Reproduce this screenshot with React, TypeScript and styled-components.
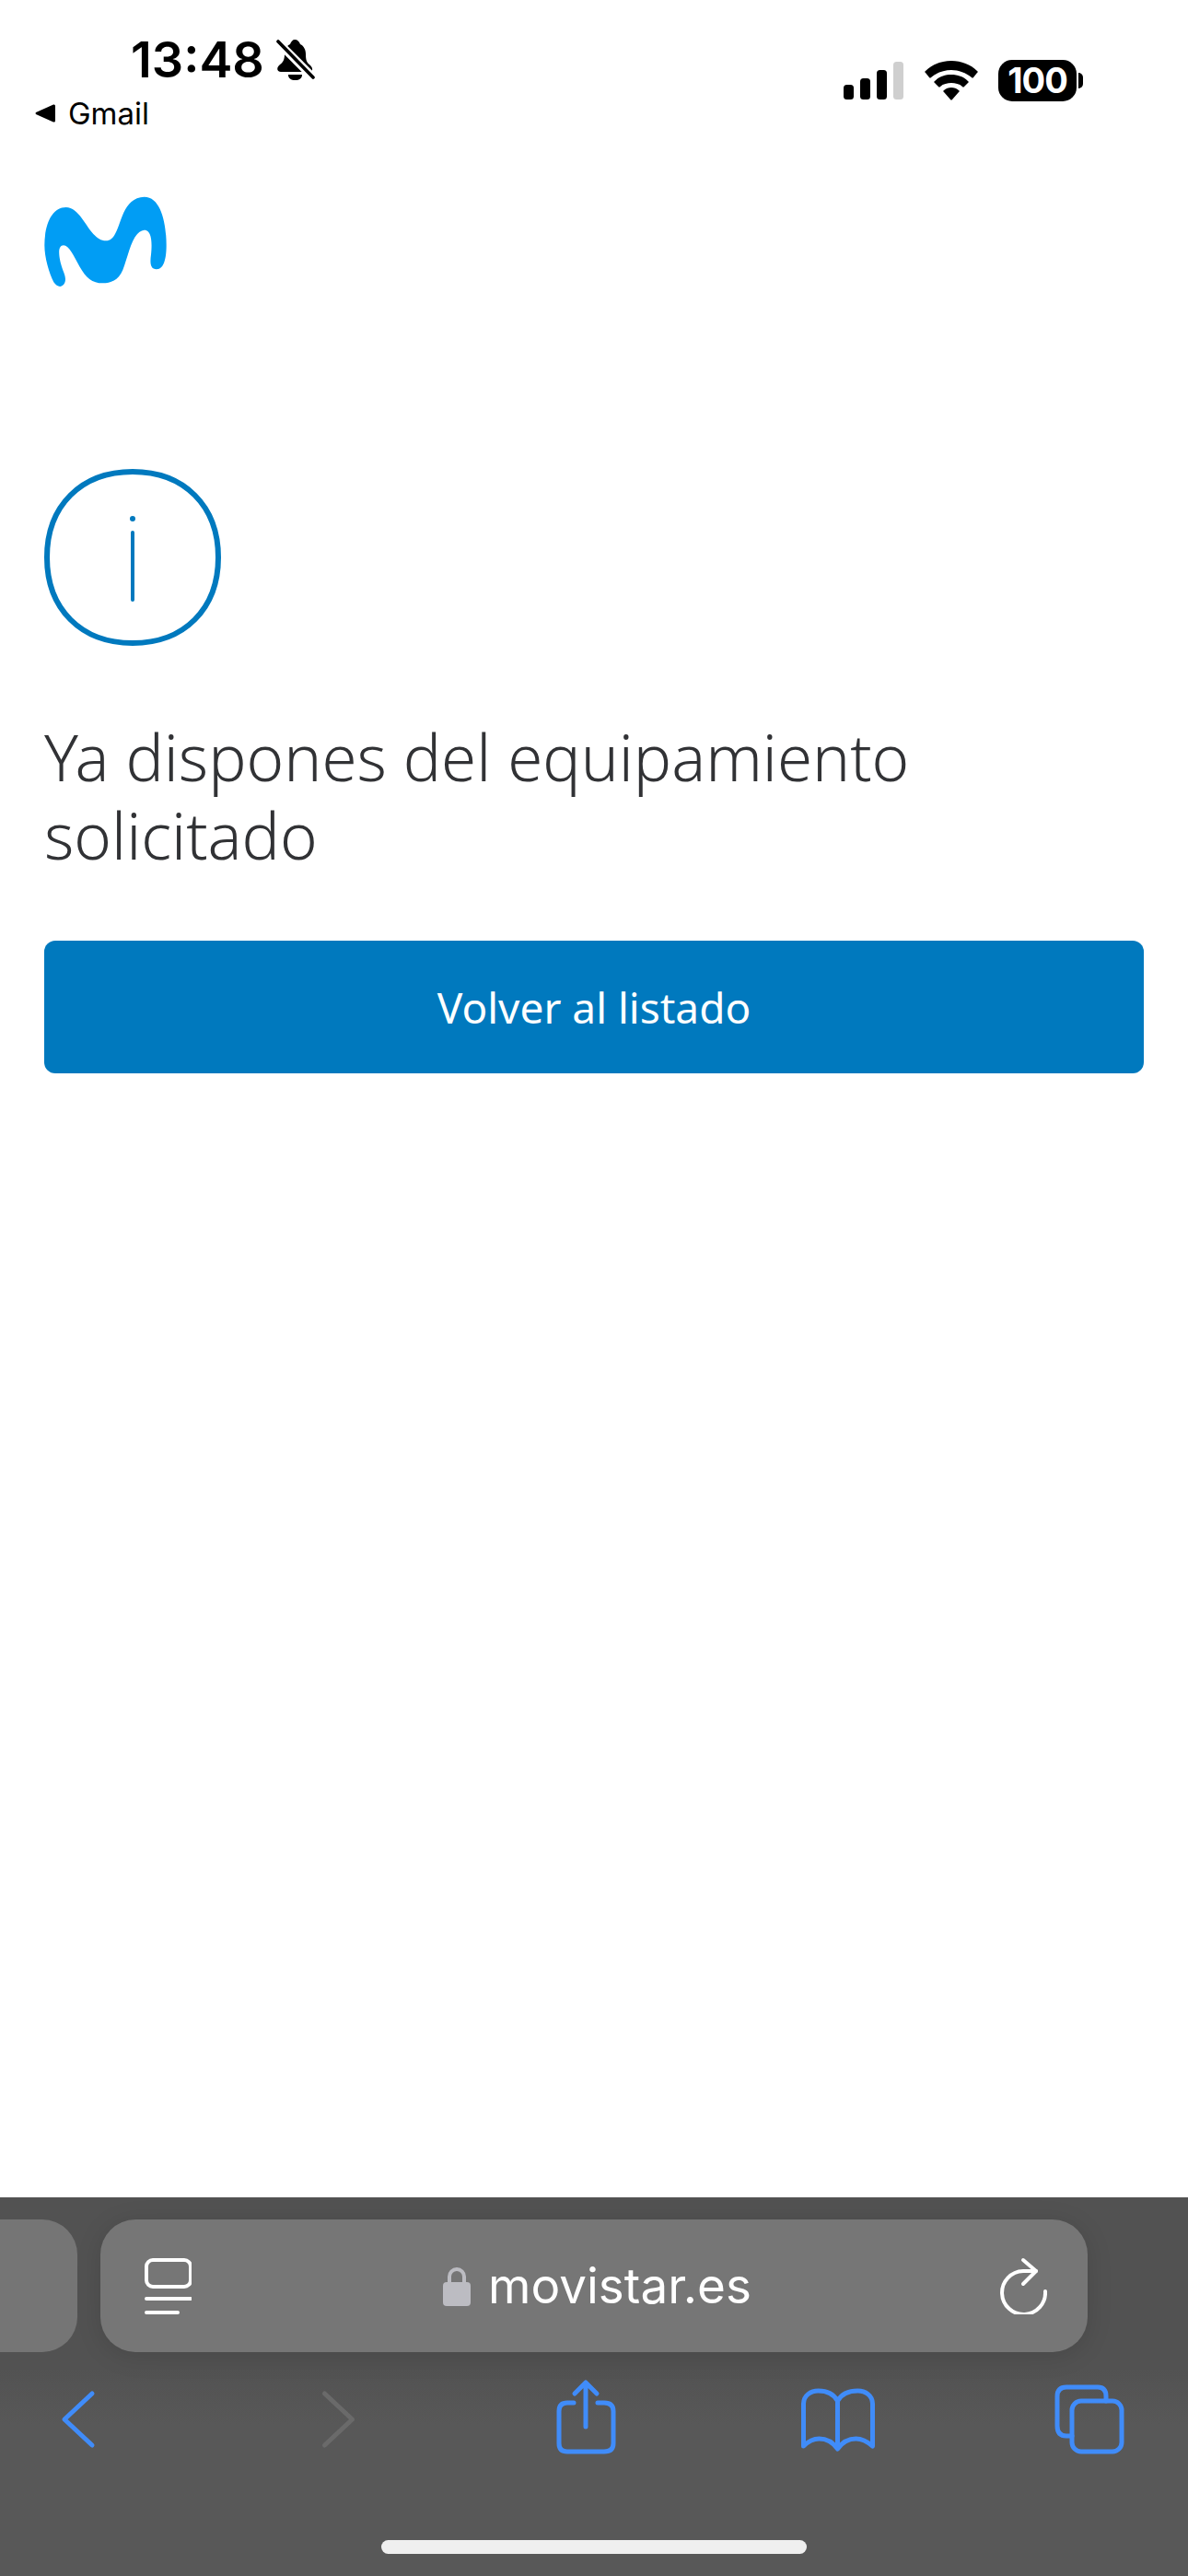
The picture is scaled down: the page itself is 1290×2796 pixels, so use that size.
import React from "react";
import styled, { createGlobalStyle } from "styled-components";

const Global = createGlobalStyle`
  html, body { margin: 0; padding: 0; background: #fff; }
  * { box-sizing: border-box; }
`;

const Page = styled.div`
  width: 1290px;
  height: 2796px;
  display: flex;
  flex-direction: column;
  overflow: hidden;
  background: #fff;
`;

const StatusBar = styled.header`
  height: 148px;
  display: flex;
  justify-content: space-between;
  align-items: flex-start;
  font-family: Inter, "Liberation Sans", sans-serif;
  color: #000;
`;

const StatusLeft = styled.div`
  display: flex;
  flex-direction: column;
`;

const TimeRow = styled.div`
  display: flex;
  align-items: center;
  height: 50px;
  margin-top: 40px;
  padding-left: 142px;
  gap: 12px;
`;

const Time = styled.span`
  font-size: 54px;
  line-height: 50px;
  font-weight: 600;
`;

const BackRow = styled.div`
  display: flex;
  align-items: center;
  height: 34px;
  margin-top: 16px;
  padding-left: 38px;
  gap: 14px;
`;

const BackLabel = styled.span`
  font-size: 33px;
  line-height: 34px;
  font-weight: 400;
`;

const StatusRight = styled.div`
  display: flex;
  align-items: center;
  height: 46px;
  margin-top: 64px;
  margin-right: 121px;
  gap: 22px;
`;

const Battery = styled.div`
  position: relative;
  width: 85px;
  height: 45px;
  border-radius: 15px;
  background: #000;
  color: #fff;
  font-size: 38px;
  line-height: 45px;
  font-weight: 700;
  text-align: center;
  letter-spacing: -1px;
  &::after {
    content: "";
    position: absolute;
    left: 87px;
    top: 14px;
    width: 5px;
    height: 17px;
    border-radius: 0 9px 9px 0;
    background: #000;
  }
`;

const Main = styled.main`
  flex: 1;
  padding: 65px 48px 0;
  display: flex;
  flex-direction: column;
  align-items: flex-start;
`;

const Logo = styled.svg`
  display: block;
  width: 134px;
  height: 100px;
`;

const InfoIcon = styled.svg`
  display: block;
  width: 192px;
  height: 192px;
  margin-top: 196px;
`;

const Heading = styled.h1`
  margin: 78px 0 0;
  width: 1100px;
  font-family: "Noto Sans", "Open Sans", sans-serif;
  font-size: 69px;
  line-height: 85px;
  font-weight: 300;
  color: #313235;
`;

const PrimaryButton = styled.button`
  margin-top: 72px;
  width: 1194px;
  height: 144px;
  border: 0;
  border-radius: 12px;
  background: #0079be;
  color: #fff;
  font-family: "Noto Sans", "Open Sans", sans-serif;
  font-size: 46px;
  font-weight: 400;
`;

const Toolbar = styled.footer`
  height: 411px;
  padding-top: 24px;
  background: linear-gradient(180deg, #525252 0%, #525252 45%, #585858 60%, #585858 100%);
  display: flex;
  flex-direction: column;
`;

const PillRow = styled.div`
  display: flex;
  gap: 25px;
  margin-left: -60px;
`;

const SidePill = styled.div`
  flex: none;
  width: 144px;
  height: 144px;
  border-radius: 38px;
  background: #757575;
`;

const AddressPill = styled.div`
  flex: none;
  width: 1072px;
  height: 144px;
  border-radius: 38px;
  background: #767676;
  box-shadow: 0 4px 28px rgba(0, 0, 0, 0.12);
  display: flex;
  align-items: center;
  justify-content: space-between;
  padding: 0 44px 0 47px;
`;

const Address = styled.div`
  display: flex;
  align-items: center;
  gap: 19px;
  margin-left: 4px;
  color: #fff;
  font-family: Inter, "Liberation Sans", sans-serif;
  font-size: 53px;
  line-height: 60px;
  font-weight: 400;
`;

const Actions = styled.nav`
  display: flex;
  justify-content: space-between;
  padding: 22px 57px 0 35px;
`;

const ActionIcon = styled.svg`
  display: block;
  width: 100px;
  height: 100px;
  fill: none;
  stroke: ${(p: { $tone?: string }) => p.$tone || "#408cf9"};
  stroke-width: 5;
  stroke-linecap: round;
  stroke-linejoin: round;
`;

const HomeIndicator = styled.div`
  width: 462px;
  height: 15px;
  margin: 82px 0 0 414px;
  border-radius: 8px;
  background: #efefef;
`;

export default function App() {
  return (
    <Page>
      <Global />
      <StatusBar>
        <StatusLeft>
          <TimeRow>
            <Time>13:48</Time>
            <svg width="43" height="46" viewBox="298 42 43 46">
              <path d="M319 43c3 0 5 2 6 5 4 2 6 6 6 11 0 6 1 9 5 12 3 3 3 7-1 7h-31c-4 0-5-4-2-7 4-3 6-6 6-12 0-5 2-9 6-11 1-3 3-5 5-5z" fill="#000" />
              <path d="M312 81h15c0 4-3 6-7.500 6s-7.500-2-7.500-6z" fill="#000" />
              <path d="M300 45l39 39" stroke="#fff" strokeWidth="9" />
              <path d="M301 45l38 39" stroke="#000" strokeWidth="3.600" strokeLinecap="round" />
            </svg>
          </TimeRow>
          <BackRow>
            <svg width="22" height="22" viewBox="0 0 22 22">
              <path d="M20 1.500 L1 10 Q0 11 1 12 L20 20.500 Q22 21 22 19 V3 Q22 1 20 1.500Z" fill="#000" />
            </svg>
            <BackLabel>Gmail</BackLabel>
          </BackRow>
        </StatusLeft>
        <StatusRight>
          <svg width="66" height="42" viewBox="916 65 66 42">
            <rect x="916" y="91" width="11" height="16" rx="3.500" fill="#000" />
            <rect x="934" y="84" width="11" height="23" rx="3.500" fill="#000" />
            <rect x="952" y="75" width="11" height="32" rx="3.500" fill="#000" />
            <rect x="970" y="66" width="11" height="41" rx="3.500" fill="#cfcfcf" />
          </svg>
          <svg width="58" height="43" viewBox="1004 65 58 43">
            <path d="M1033 65c11 0 21 4 28 11 1 1 1 1 0 2l-4 5c-1 1-1 1-2 0-6-5-14-8-22-8s-16 3-22 8c-1 1-1 1-2 0l-4-5c-1-1-1-1 0-2 7-7 17-11 28-11z" fill="#000" />
            <path d="M1033 80c7 0 13 2 18 7 1 1 1 1 0 2l-4 4c-1 1-1 1-2 0-3-3-8-4-12-4s-9 1-12 4c-1 1-1 1-2 0l-4-4c-1-1-1-1 0-2 5-5 11-7 18-7z" fill="#000" />
            <path d="M1033 94c3 0 6 1 8 3 1 1 1 1 0 2l-7 8c-1 1-1 1-2 0l-7-8c-1-1-1-1 0-2 2-2 5-3 8-3z" fill="#000" />
          </svg>
          <Battery>100</Battery>
        </StatusRight>
      </StatusBar>
      <Main>
        <Logo viewBox="145 640 400 300">
          <path
            d="M175 920C160 890 145 840 145 800C145 730 170 676 215 676C270 676 290 785 345 785C400 785 380 645 470 642C525 642 542 730 542 800C542 840 535 878 510 878C490 878 488 860 492 830C495 800 497 750 470 750C430 755 420 830 400 880C385 915 360 923 335 923C300 923 280 905 260 870C240 835 225 800 207 800C190 800 190 825 197 855C205 885 213 895 213 910C213 932 192 945 175 920Z"
            fill="#019df4"
          />
        </Logo>
        <InfoIcon viewBox="0 0 192 192">
          <path
            d="M96 3C152 3 189 40 189 96C189 152 152 189 96 189C40 189 3 152 3 96C3 40 40 3 96 3Z"
            fill="none"
            stroke="#0079be"
            strokeWidth="6"
          />
          <circle cx="96" cy="54" r="3" fill="#0079be" />
          <path d="M96 69V142" stroke="#0079be" strokeWidth="4" strokeLinecap="round" />
        </InfoIcon>
        <Heading>Ya dispones del equipamiento solicitado</Heading>
        <PrimaryButton>Volver al listado</PrimaryButton>
      </Main>
      <Toolbar>
        <PillRow>
          <SidePill />
          <AddressPill>
            <svg width="52" height="62" viewBox="156 2450 52 62" fill="none" stroke="#fff" strokeWidth="4" strokeLinecap="round">
              <rect x="159" y="2453" width="48" height="29" rx="7" />
              <path d="M159 2495H207M159 2510H193" />
            </svg>
            <Address>
              <svg width="30" height="44" viewBox="0 0 30 44">
                <path d="M7 20V12a8 8 0 0 1 16 0v8" fill="none" stroke="#bcbcc2" strokeWidth="4" />
                <rect x="0" y="18" width="30" height="26" rx="4" fill="#bcbcc2" />
              </svg>
              movistar.es
            </Address>
            <svg width="52" height="62" viewBox="1086 2446 52 62" fill="none" stroke="#fff" strokeWidth="4" strokeLinecap="round" strokeLinejoin="round">
              <path d="M1136 2483A23.500 23.500 0 1 1 1112 2461H1126" />
              <path d="M1112 2449L1126 2461L1112 2475" />
            </svg>
          </AddressPill>
        </PillRow>
        <Actions>
          <ActionIcon viewBox="35 2575 100 100">
            <path d="M100 2598L70 2626L100 2654" />
          </ActionIcon>
          <ActionIcon viewBox="309.500 2575 100 100" $tone="#6a6a6a">
            <path d="M352 2598L382 2626L352 2654" />
          </ActionIcon>
          <ActionIcon viewBox="584 2575 100 100">
            <path d="M623 2608H616Q607 2608 607 2617V2652Q607 2661 616 2661H656Q666 2661 666 2652V2617Q666 2608 656 2608H649" />
            <path d="M636 2634V2587M624 2598L636 2586L648 2598" />
          </ActionIcon>
          <ActionIcon viewBox="858.500 2575 100 100">
            <path d="M909 2606C904 2597 895 2595 888 2595C880 2595 872 2600 872 2609V2655C878 2649 883 2647 889 2647C897 2647 904 2651 909 2658C914 2651 921 2647 929 2647C935 2647 940 2649 947 2655V2609C947 2600 939 2595 931 2595C924 2595 914 2597 909 2606Z" />
            <path d="M909 2606V2656" />
          </ActionIcon>
          <ActionIcon viewBox="1133 2575 100 100">
            <path d="M1201 2606V2601Q1201 2591 1192 2591H1158Q1148 2591 1148 2601V2633Q1148 2644 1158 2644H1164" />
            <rect x="1164" y="2606" width="54" height="55" rx="10" />
          </ActionIcon>
        </Actions>
        <HomeIndicator />
      </Toolbar>
    </Page>
  );
}
